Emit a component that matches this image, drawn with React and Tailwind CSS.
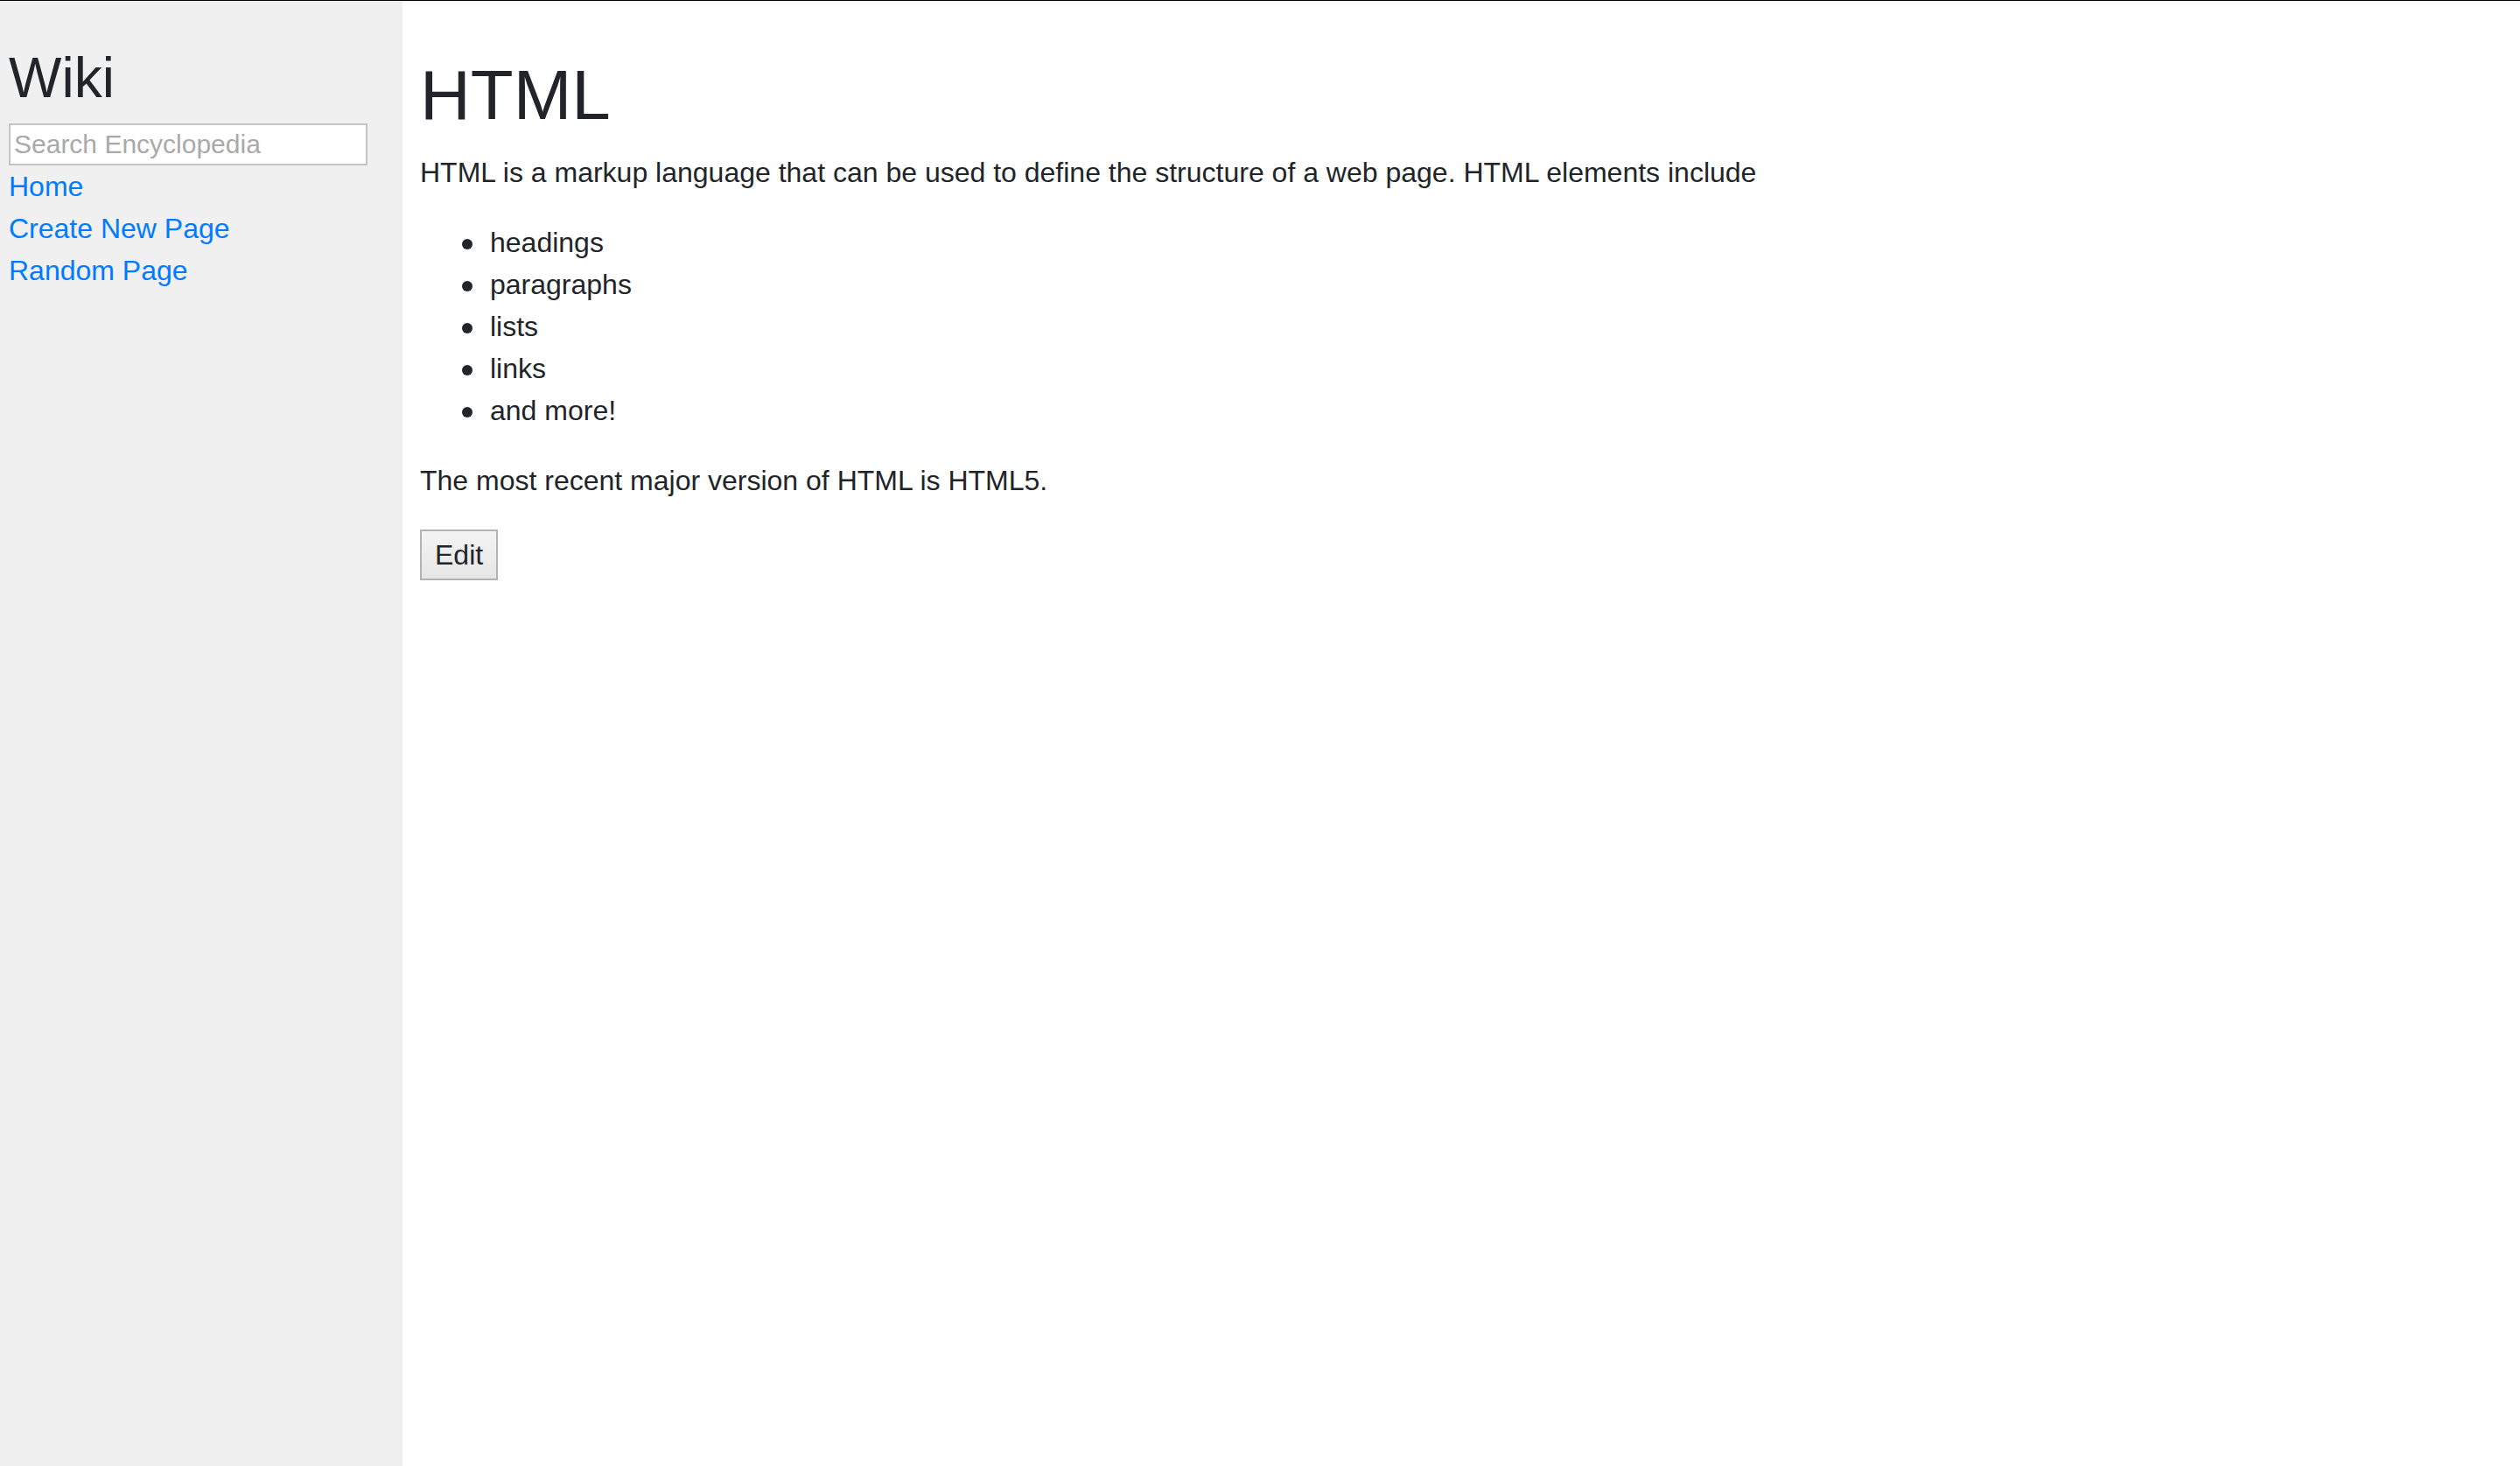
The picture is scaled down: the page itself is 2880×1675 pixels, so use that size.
import React from 'react';

const items = ['headings', 'paragraphs', 'lists', 'links', 'and more!'];

const App = () => {
  return (
    <div className="h-[1675px] flex border-t border-black font-['Liberation_Sans',Arial,sans-serif] text-[#212529] text-[32px] leading-[48px] bg-white">
      {/* Sidebar */}
      <div className="w-[460px] shrink-0 bg-[#f0f0f0] pt-[40px] pl-[10px] pr-[40px]">
        <h2 className="mt-[10px] mb-[13px] text-[64px] leading-[76.8px] font-normal">Wiki</h2>
        <form>
          <input
            type="text"
            placeholder="Search Encyclopedia"
            className="block w-full h-[48px] px-[4px] text-[30px] bg-white border-2 border-[#c4c4c4] placeholder:text-[#a9a9a9] outline-none"
          />
        </form>
        <div><a href="#" className="text-[#007bff]">Home</a></div>
        <div><a href="#" className="text-[#007bff]">Create New Page</a></div>
        <div><a href="#" className="text-[#007bff]">Random Page</a></div>
      </div>

      {/* Main */}
      <div className="flex-1 p-[20px]">
        <h1 className="pt-[40px] mb-[16px] text-[80px] leading-[96px] font-normal">HTML</h1>
        <p className="mb-[32px]">
          HTML is a markup language that can be used to define the structure of a web page. HTML elements include
        </p>
        <ul className="pl-[80px] mb-[32px]">
          {items.map((item) => (
            <li key={item} className="flex items-start">
              <span className="shrink-0 w-[12px] h-[12px] mt-[20px] ml-[-32px] mr-[20px] rounded-full bg-[#212529]"></span>
              <span>{item}</span>
            </li>
          ))}
        </ul>
        <p className="mb-[32px]">The most recent major version of HTML is HTML5.</p>
        <button className="h-[58px] px-[15px] border-2 border-[#b3b3b3] bg-gradient-to-b from-[#f4f4f4] to-[#e6e6e6] text-[32px] leading-[48px]">
          Edit
        </button>
      </div>
    </div>
  );
};

export default App;
